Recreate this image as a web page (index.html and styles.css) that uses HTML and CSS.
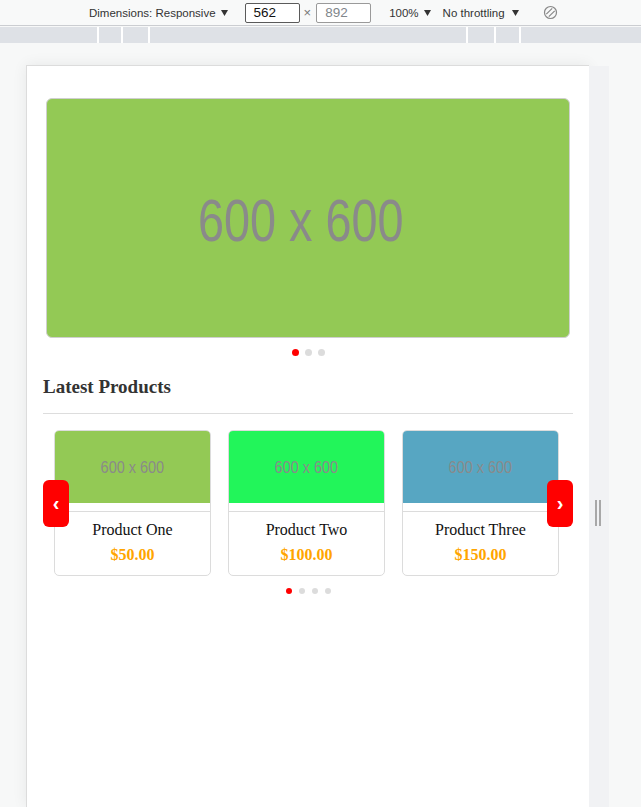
FILE: index.html
```html
<!DOCTYPE html>
<html lang="en">
<head>
<meta charset="utf-8">
<title>Responsive preview</title>
<link rel="stylesheet" href="styles.css">
</head>
<body>
<div class="toolbar">
  <span class="label dims">Dimensions: Responsive</span>
  <svg class="caret" width="7" height="6" viewBox="0 0 7 6"><path d="M0 0H7L3.5 6Z" fill="#333"/></svg>
  <span class="box dark">562</span>
  <span class="times">×</span>
  <span class="box light">892</span>
  <span class="label pct">100%</span>
  <svg class="caret" width="7" height="6" viewBox="0 0 7 6"><path d="M0 0H7L3.5 6Z" fill="#333"/></svg>
  <span class="label thr">No throttling</span>
  <svg class="caret thr-caret" width="7" height="6" viewBox="0 0 7 6"><path d="M0 0H7L3.5 6Z" fill="#333"/></svg>
  <svg class="rotate" width="15" height="15" viewBox="0 0 15 15"><circle cx="7.5" cy="7.5" r="6" fill="none" stroke="#888" stroke-width="1.2"/><path d="M3.3 9.2L9.2 3.3M5.8 11.7L11.7 5.8" stroke="#888" stroke-width="1.2" fill="none"/></svg>
</div>
<div class="ruler">
  <span></span><span></span><span></span><span></span><span></span><span></span><span></span>
</div>
<div class="stage">
  <div class="viewport">
    <div class="hero"><span class="ph-big">600 x 600</span></div>
    <div class="dots big">
      <span class="dot on"></span><span class="dot"></span><span class="dot"></span>
    </div>
    <section class="products">
      <h2 class="title">Latest Products</h2>
      <hr class="rule">
      <div class="slider">
        <div class="cards">
          <div class="card">
            <div class="thumb g1"><span class="ph-small">600 x 600</span></div>
            <div class="card-body"><div class="name">Product One</div><div class="price">$50.00</div></div>
          </div>
          <div class="card">
            <div class="thumb g2"><span class="ph-small">600 x 600</span></div>
            <div class="card-body"><div class="name">Product Two</div><div class="price">$100.00</div></div>
          </div>
          <div class="card">
            <div class="thumb g3"><span class="ph-small">600 x 600</span></div>
            <div class="card-body"><div class="name">Product Three</div><div class="price">$150.00</div></div>
          </div>
        </div>
        <button class="arrow prev">‹</button>
        <button class="arrow next">›</button>
      </div>
      <div class="dots small">
        <span class="dot on"></span><span class="dot"></span><span class="dot"></span><span class="dot"></span>
      </div>
    </section>
  </div>
  <div class="strip"><div class="grip"></div></div>
</div>
</body>
</html>
```
FILE: styles.css
```css
* { box-sizing: border-box; }
html, body { margin: 0; padding: 0; }
body {
  width: 641px;
  height: 807px;
  overflow: hidden;
  background: #f7f8f8;
  font-family: "Liberation Sans", Arial, sans-serif;
}

/* devtools toolbar */
.toolbar {
  height: 26px;
  border-bottom: 1px solid #cbcdd1;
  background: #f8f9f9;
  display: flex;
  align-items: center;
  padding-left: 89px;
  color: #333;
  font-size: 11.5px;
}
.label { line-height: 14px; }
.caret { margin-left: 5px; flex: none; }
.thr-caret { margin-left: 7px; }
.box {
  width: 55px;
  height: 20px;
  border: 1px solid #767676;
  border-radius: 2px;
  background: #fff;
  font-size: 13.5px;
  line-height: 18px;
  padding-left: 8px;
  color: #111;
  flex: none;
}
.box.dark { margin-left: 17px; border-color: #5a5a5a; }
.box.light { color: #80868b; border-color: #9a9a9a; }
.times { margin: 0 5px 0 4px; color: #777; font-size: 13px; }
.pct { margin-left: 18px; }
.thr { margin-left: 12px; }
.rotate { margin-left: 24px; flex: none; }

.ruler {
  margin-top: 1px;
  height: 16px;
  background: #fff;
  display: grid;
  grid-template-columns: 97px 22px 25px 316px 26px 23px 1fr;
  column-gap: 2px;
}
.ruler span { background: #dee1e6; }

/* stage */
.stage {
  display: flex;
  align-items: flex-start;
  padding-top: 22px;
}
.viewport {
  margin-left: 26px;
  width: 563px;
  height: 742px;
  flex: none;
  background: #fff;
  border-top: 1px solid #dcdcdc;
  border-left: 1px solid #dcdcdc;
  box-shadow: 0 0 14px rgba(0,0,0,0.07);
  font-family: "Liberation Serif", "Times New Roman", serif;
}
.strip {
  margin-top: 1px;
  width: 20px;
  height: 741px;
  background: #f1f2f4;
  display: flex;
  flex-direction: column;
  align-items: center;
  flex: none;
}
.grip {
  margin-top: 434px;
  width: 6px;
  height: 26px;
  border-left: 2px solid #a8a8a8;
  border-right: 2px solid #a8a8a8;
  margin-left: -2px;
}

/* hero */
.hero {
  margin: 32px 19px 0;
  height: 240px;
  border: 1px solid #cfcfcf;
  border-radius: 6px;
  background: #93c955;
  display: flex;
  align-items: center;
  justify-content: center;
  overflow: hidden;
}
.ph-big {
  font-family: "Liberation Sans", Arial, sans-serif;
  font-size: 60px;
  color: #8a8a8a;
  display: inline-block;
  transform: translate(-7px, 2px) scaleX(0.78);
}

.dots {
  display: flex;
  justify-content: center;
}
.dots.big { margin-top: 11px; gap: 6px; }
.dots.big .dot { width: 7px; height: 7px; }
.dots.small { margin-top: 12px; gap: 7px; }
.dots.small .dot { width: 6px; height: 6px; }
.dot { border-radius: 50%; background: #dcdcdc; }
.dot.on { background: #ff0000; }

/* products */
.products { padding: 0 16px; }
.title {
  margin: 20px 0 0;
  font-size: 19px;
  line-height: 22px;
  font-weight: bold;
  color: #333;
}
.rule {
  margin: 15px 0 0;
  border: 0;
  border-top: 1px solid #ddd;
  height: 0;
}
.slider {
  position: relative;
  margin-top: 16px;
}
.cards {
  display: flex;
  gap: 17px;
  margin-left: 11px;
}
.card {
  width: 157px;
  border: 1px solid #dcdcdc;
  border-radius: 5px;
  overflow: hidden;
  background: #fff;
}
.thumb {
  height: 81px;
  border-bottom: 1px solid #dcdcdc;
  display: flex;
  justify-content: center;
}
.thumb.g1 { background: linear-gradient(#93c955 72px, #fff 72px); }
.thumb.g2 { background: linear-gradient(#22f55a 72px, #fff 72px); }
.thumb.g3 { background: linear-gradient(#57a6c2 72px, #fff 72px); }
.ph-small {
  font-family: "Liberation Sans", Arial, sans-serif;
  font-size: 17px;
  line-height: 74px;
  height: 72px;
  color: #8a8a8a;
  display: inline-block;
  transform: scaleX(0.85);
}
.card-body {
  padding: 7px 0 8px;
  text-align: center;
}
.name {
  font-size: 16px;
  line-height: 22px;
  color: #111;
}
.price {
  margin-top: 2px;
  font-size: 16px;
  line-height: 24px;
  font-weight: bold;
  color: #ffa500;
}
.arrow {
  position: absolute;
  z-index: 2;
  top: 50px;
  width: 26px;
  height: 47px;
  border: 0;
  border-radius: 6px;
  background: #ff0000;
  color: #fff;
  font-family: "Liberation Sans", Arial, sans-serif;
  font-size: 20px;
  font-weight: bold;
  line-height: 45px;
  padding: 0;
  text-align: center;
}
.arrow.prev { left: 0; }
.arrow.next { right: 0; }
```
